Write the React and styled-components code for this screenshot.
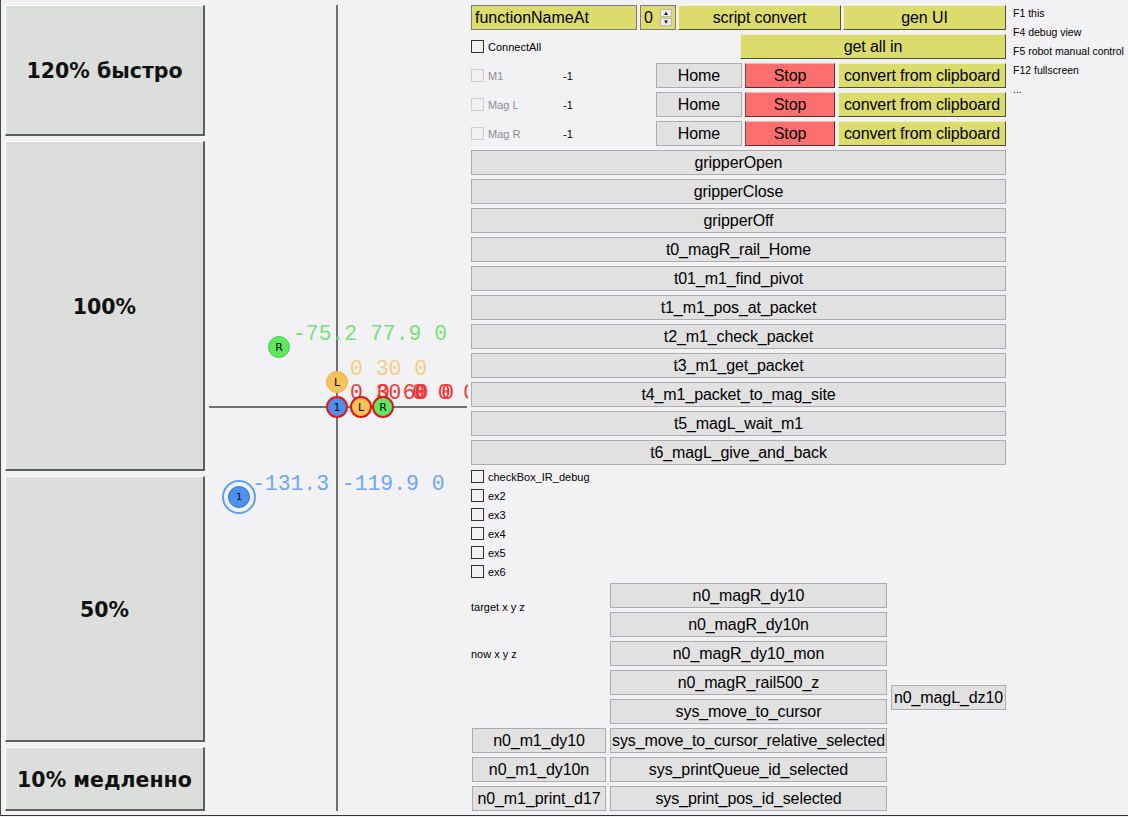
import React from "react";
import styled, { createGlobalStyle, css } from "styled-components";

const GlobalStyle = createGlobalStyle`
  html, body {
    margin: 0;
    padding: 0;
    background: #f2f1f4;
    overflow: hidden;
  }
  body {
    font-family: "Liberation Sans", Arial, sans-serif;
    color: #000;
  }
`;

const Frame = styled.div`
  display: flex;
  width: 1128px;
  height: 816px;
  box-sizing: border-box;
  border-left: 1px solid #4a4a4a;
  border-bottom: 1px solid #333;
`;

// left speed selector
const SpeedColumn = styled.div`
  display: flex;
  flex-direction: column;
  gap: 5px;
  padding: 5px 0 0 4px;
  width: 200px;
  flex: none;
`;

const SpeedButton = styled.div`
  box-sizing: border-box;
  height: ${p => p.$h}px;
  display: flex;
  align-items: center;
  justify-content: center;
  padding-top: 2px;
  background: #dcdedb;
  border-top: 1px solid #fff;
  border-left: 1px solid #fff;
  border-right: 2px solid #5e5e5e;
  border-bottom: 2px solid #5e5e5e;
  font-family: "DejaVu Sans", Verdana, sans-serif;
  font-weight: bold;
  font-size: 20.5px;
  color: #111;
`;

// plot canvas
const Canvas = styled.div`
  position: relative;
  width: 261px;
  margin-left: 2px;
  flex: none;
  overflow: hidden;
`;

const Axis = styled.div`
  position: absolute;
  background: #707070;
  ${p => p.$vertical
    ? css`left: 129px; top: 5px; width: 2px; height: 806px;`
    : css`left: 2px; top: 406px; width: 258px; height: 2px;`}
`;

const Node = styled.div`
  position: absolute;
  box-sizing: border-box;
  width: ${p => p.$d}px;
  height: ${p => p.$d}px;
  border-radius: 50%;
  transform: translate(-50%, -50%);
  background: ${p => p.$fill};
  border: ${p => p.$ring ? `2px solid ${p.$ring}` : `1px solid ${p.$edge}`};
  display: flex;
  align-items: center;
  justify-content: center;
  font-family: "DejaVu Sans", sans-serif;
  font-size: ${p => p.$fs || 11}px;
  color: #000;
`;

const Halo = styled.div`
  position: absolute;
  box-sizing: border-box;
  width: 34px;
  height: 34px;
  border-radius: 50%;
  transform: translate(-50%, -50%);
  border: 2px solid #5fa2f0;
`;

const Coord = styled.div`
  position: absolute;
  font-family: "Liberation Mono", "Courier New", monospace;
  font-size: 21.4px;
  line-height: 21px;
  white-space: pre;
  color: ${p => p.$color};
`;

// right control panel
const Panel = styled.div`
  display: flex;
  flex-direction: column;
  gap: 4px;
  width: 535px;
  margin-left: 3px;
  padding-top: 5px;
  flex: none;
`;

const Row = styled.div`
  display: flex;
  align-items: center;
  height: 25px;
  gap: ${p => p.$gap ?? 3}px;
`;

const kinds = {
  gray: css`
    background: #e1e1e1;
    border: 1px solid #adadad;
  `,
  yellow: css`
    background: #dcdc6c;
    border: 1px solid;
    border-color: #f2f2c0 #4e4e3a #4e4e3a #f2f2c0;
  `,
  red: css`
    background: #ff6e6e;
    border: 1px solid;
    border-color: #ffb4b4 #5a2c2c #5a2c2c #8a4040;
  `,
};

const Btn = styled.button`
  box-sizing: border-box;
  height: 25px;
  width: ${p => (p.$w ? `${p.$w}px` : "100%")};
  flex: none;
  margin: 0;
  padding: 1px 0 0;
  display: flex;
  align-items: center;
  justify-content: center;
  font-family: "Liberation Sans", Arial, sans-serif;
  font-size: 16px;
  letter-spacing: -0.1px;
  color: #000;
  white-space: nowrap;
  overflow: visible;
  ${p => kinds[p.$kind || "gray"]}
`;

const NameField = styled.div`
  box-sizing: border-box;
  width: 166px;
  height: 25px;
  padding: 1px 0 0 3px;
  display: flex;
  align-items: center;
  background: #dcdc6c;
  border: 1px solid #7c7c7c;
  font-size: 16px;
`;

const Spin = styled.div`
  box-sizing: border-box;
  width: 36px;
  height: 25px;
  display: flex;
  align-items: center;
  justify-content: space-between;
  padding: 1px 3px 0 3px;
  background: #dcdc6c;
  border: 1px solid #7c7c7c;
  font-size: 16px;
`;

const SpinArrows = styled.div`
  display: flex;
  flex-direction: column;
  gap: 1px;
  margin-top: -1px;
`;

const SpinArrow = styled.div`
  width: 12px;
  height: 8px;
  box-sizing: border-box;
  background: #ececec;
  border: 1px solid #b8b8b8;
  display: flex;
  align-items: center;
  justify-content: center;
  font-size: 6px;
  line-height: 1;
  color: #111;
`;

const CheckItem = styled.div`
  display: flex;
  align-items: center;
  gap: 4px;
  height: ${p => p.$h || 19}px;
  width: ${p => (p.$w ? `${p.$w}px` : "auto")};
  flex: none;
  font-size: 11px;
  color: ${p => (p.$disabled ? "#8e8e8e" : "#000")};
`;

const Box = styled.span`
  box-sizing: border-box;
  width: 13px;
  height: 13px;
  flex: none;
  border: 1px solid ${p => (p.$disabled ? "#cfcfcf" : "#333")};
`;

const Value = styled.div`
  width: 93px;
  flex: none;
  font-size: 11px;
`;

const CheckList = styled.div`
  display: flex;
  flex-direction: column;
  margin: -2px 0;
`;

const Grid = styled.div`
  display: grid;
  grid-template-columns: 136px 277px 115px;
  grid-auto-rows: 25px;
  column-gap: 3px;
  row-gap: 4px;
`;

const Cell = styled.div`
  grid-column: ${p => p.$col};
  grid-row: ${p => p.$row};
  display: flex;
  align-items: center;
  align-self: ${p => p.$align || "stretch"};
  margin-left: ${p => p.$ml || 0}px;
  padding-bottom: ${p => p.$pb || 0}px;
  font-size: 11px;
`;

const Hints = styled.div`
  display: flex;
  flex-direction: column;
  margin-left: 7px;
  padding-top: 4px;
  font-size: 10.5px;
  line-height: 19px;
  white-space: nowrap;
`;

const actions = [
  "gripperOpen",
  "gripperClose",
  "gripperOff",
  "t0_magR_rail_Home",
  "t01_m1_find_pivot",
  "t1_m1_pos_at_packet",
  "t2_m1_check_packet",
  "t3_m1_get_packet",
  "t4_m1_packet_to_mag_site",
  "t5_magL_wait_m1",
  "t6_magL_give_and_back",
];

const motors = ["M1", "Mag L", "Mag R"];
const extras = ["checkBox_IR_debug", "ex2", "ex3", "ex4", "ex5", "ex6"];

const middle = [
  "n0_magR_dy10",
  "n0_magR_dy10n",
  "n0_magR_dy10_mon",
  "n0_magR_rail500_z",
  "sys_move_to_cursor",
  "sys_move_to_cursor_relative_selected",
  "sys_printQueue_id_selected",
  "sys_print_pos_id_selected",
];

const leftCol = ["n0_m1_dy10", "n0_m1_dy10n", "n0_m1_print_d17"];

const ORANGE = "#f6c257";
const GREEN = "#5ee85e";
const BLUE = "#4a92ec";
const RED = "#e81414";

export default function App() {
  return (
    <Frame>
      <GlobalStyle />
      <SpeedColumn>
        <SpeedButton $h={131}>120% быстро</SpeedButton>
        <SpeedButton $h={330}>100%</SpeedButton>
        <SpeedButton $h={266}>50%</SpeedButton>
        <SpeedButton $h={64}>10% медленно</SpeedButton>
      </SpeedColumn>

      <Canvas>
        <Axis $vertical />
        <Axis />
        <Coord $color="#76e276" style={{ left: 86, top: 324 }}>-75.2 77.9 0</Coord>
        <Coord $color="#f8cc82" style={{ left: 143, top: 359 }}>0 30 0</Coord>
        <Coord $color="#ff3030" style={{ left: 143, top: 383 }}>0 30 0</Coord>
        <Coord $color="#ff3030" style={{ left: 170, top: 383 }}>0 60 0</Coord>
        <Coord $color="#ff3030" style={{ left: 205, top: 383 }}>0 0 0</Coord>
        <Coord $color="#6ca8f2" style={{ left: 45, top: 474 }}>-131.3 -119.9 0</Coord>

        <Node $d={22} $fill={GREEN} $edge="#48d048" style={{ left: 72, top: 347 }}>R</Node>
        <Node $d={22} $fill={ORANGE} $edge="#eab248" style={{ left: 130, top: 382 }}>L</Node>
        <Node $d={22} $fill={BLUE} $ring={RED} style={{ left: 130, top: 407 }}>1</Node>
        <Node $d={22} $fill={ORANGE} $ring={RED} style={{ left: 154, top: 407 }}>L</Node>
        <Node $d={22} $fill={GREEN} $ring={RED} style={{ left: 176, top: 407 }}>R</Node>

        <Halo style={{ left: 32, top: 497 }} />
        <Node $d={22} $fill={BLUE} $edge="#2f74d0" $fs={9} style={{ left: 32, top: 497 }}>1</Node>
      </Canvas>

      <Panel>
        <Row $gap={0}>
          <NameField>functionNameAt</NameField>
          <div style={{ width: 3 }} />
          <Spin>
            <span>0</span>
            <SpinArrows>
              <SpinArrow>▲</SpinArrow>
              <SpinArrow>▼</SpinArrow>
            </SpinArrows>
          </Spin>
          <div style={{ width: 2 }} />
          <Btn $kind="yellow" $w={163}>script convert</Btn>
          <div style={{ width: 2 }} />
          <Btn $kind="yellow" $w={163}>gen UI</Btn>
        </Row>

        <Row>
          <CheckItem>
            <Box />
            ConnectAll
          </CheckItem>
          <Btn $kind="yellow" $w={266} style={{ marginLeft: "auto" }}>get all in</Btn>
        </Row>

        {motors.map(m => (
          <Row key={m} $gap={0}>
            <CheckItem $disabled $w={92} $h={25}>
              <Box $disabled />
              {m}
            </CheckItem>
            <Value>-1</Value>
            <Btn $w={86}>Home</Btn>
            <div style={{ width: 3 }} />
            <Btn $kind="red" $w={90}>Stop</Btn>
            <div style={{ width: 3 }} />
            <Btn $kind="yellow" $w={168}>convert from clipboard</Btn>
          </Row>
        ))}

        {actions.map(a => (
          <Btn key={a}>{a}</Btn>
        ))}

        <CheckList>
          {extras.map(e => (
            <CheckItem key={e}>
              <Box />
              {e}
            </CheckItem>
          ))}
        </CheckList>

        <Grid>
          <Cell $col="1" $row="1 / span 2" $align="center" $pb={6}>target x y z</Cell>
          <Cell $col="1" $row="3" $align="center">now x y z</Cell>
          {middle.map((m, i) => (
            <Cell key={m} $col="2" $row={String(i + 1)}>
              <Btn>{m}</Btn>
            </Cell>
          ))}
          {leftCol.map((m, i) => (
            <Cell key={m} $col="1" $row={String(i + 6)} $ml={1}>
              <Btn $w={134}>{m}</Btn>
            </Cell>
          ))}
          <Cell $col="3" $row="4 / span 2" $align="center" $ml={1}>
            <Btn $w={115}>n0_magL_dz10</Btn>
          </Cell>
        </Grid>
      </Panel>

      <Hints>
        <span>F1 this</span>
        <span>F4 debug view</span>
        <span>F5 robot manual control</span>
        <span>F12 fullscreen</span>
        <span>...</span>
      </Hints>
    </Frame>
  );
}
